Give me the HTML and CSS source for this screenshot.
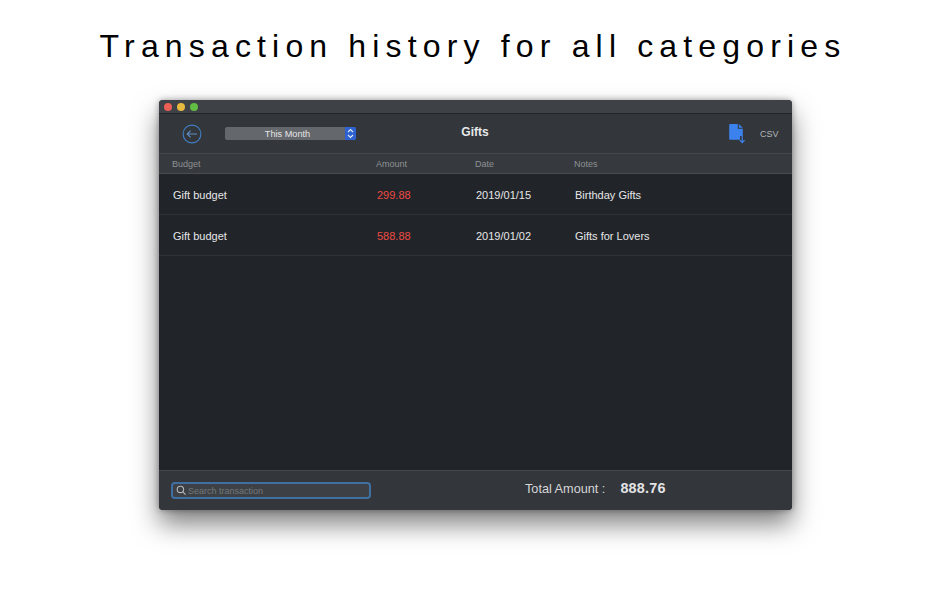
FILE: index.html
```html
<!DOCTYPE html>
<html lang="en">
<head>
<meta charset="utf-8">
<title>Transaction history</title>
<link rel="stylesheet" href="styles.css">
</head>
<body>
<h1 class="headline">Transaction history for all categories</h1>
<main class="window">
  <div class="titlebar">
    <span class="light light-red"></span>
    <span class="light light-yellow"></span>
    <span class="light light-green"></span>
  </div>
  <header class="toolbar">
    <svg class="back" width="20" height="20" viewBox="0 0 20 20" fill="none" stroke="#3f7fc4" stroke-width="1.1">
      <circle cx="10" cy="10" r="8.9"/>
      <path d="M15 10H5.2M8.6 6.6L5.2 10l3.4 3.4" stroke="#5f8fc4"/>
    </svg>
    <div class="select">
      <span class="select-label">This Month</span>
      <span class="select-arrows">
        <svg width="11" height="13" viewBox="0 0 11 13" fill="none" stroke="#dfe9ff" stroke-width="1.1">
          <path d="M3 5l2.5-2.5L8 5M3 8l2.5 2.5L8 8"/>
        </svg>
      </span>
    </div>
    <div class="win-title">Gifts</div>
    <svg class="doc" width="18" height="21" viewBox="0 0 18 21">
      <path d="M1.2 1h7.6v4.8h5v7.2h-2.8v3.8H1.2a1 1 0 0 1-1-1V2a1 1 0 0 1 1-1z" fill="#3b82ee"/>
      <path d="M9.8 1l4 3.8h-4z" fill="#3b82ee"/>
      <path d="M13.2 13v6.6M10.8 17.2l2.4 2.4 2.4-2.4" fill="none" stroke="#3b82ee" stroke-width="1.2"/>
    </svg>
    <span class="csv">CSV</span>
  </header>
  <div class="thead grid">
    <span>Budget</span><span>Amount</span><span>Date</span><span>Notes</span>
  </div>
  <section class="tbody">
    <div class="row grid">
      <span>Gift budget</span><span class="amount">299.88</span><span>2019/01/15</span><span>Birthday Gifts</span>
    </div>
    <div class="row grid">
      <span>Gift budget</span><span class="amount">588.88</span><span>2019/01/02</span><span>Gifts for Lovers</span>
    </div>
  </section>
  <footer class="footer">
    <div class="search">
      <svg width="11" height="11" viewBox="0 0 11 11" fill="none" stroke="#b4b8bb" stroke-width="1.1">
        <circle cx="4.4" cy="4.4" r="3.2"/>
        <path d="M6.8 6.8L9.6 9.6"/>
      </svg>
      <span class="placeholder">Search transaction</span>
    </div>
    <div class="total">
      <span class="total-label">Total Amount :</span>
      <span class="total-value">888.76</span>
    </div>
  </footer>
</main>
</body>
</html>
```

FILE: styles.css
```css
* { box-sizing: border-box; }
html, body { margin: 0; height: 100%; }
body {
  width: 950px;
  height: 594px;
  overflow: hidden;
  background: #fff;
  font-family: "Liberation Sans", Arial, sans-serif;
  display: flex;
  flex-direction: column;
  align-items: center;
}
.headline {
  margin: 27px 4px 0 0;
  height: 73px;
  font-size: 32px;
  line-height: 38px;
  font-weight: 400;
  letter-spacing: 6.16px;
  color: #000;
  white-space: nowrap;
}
.window {
  width: 633px;
  height: 410px;
  margin-left: 1px;
  display: flex;
  flex-direction: column;
  border-radius: 4px;
  overflow: hidden;
  background: #212429;
  box-shadow: 0 14px 26px rgba(0, 0, 0, .5), 0 0 6px rgba(0, 0, 0, .35);
}
.titlebar {
  height: 14px;
  flex: none;
  display: flex;
  align-items: center;
  gap: 5px;
  padding-left: 5px;
  background: #3e4145;
  border-bottom: 1px solid #232528;
}
.light { width: 8px; height: 8px; border-radius: 50%; }
.light-red { background: #ec5f55; }
.light-yellow { background: #e6b93f; }
.light-green { background: #62bd45; }
.toolbar {
  height: 40px;
  flex: none;
  display: flex;
  align-items: center;
  padding-left: 23px;
  background: #33363b;
  border-bottom: 1px solid #44474b;
}
.back { flex: none; }
.select {
  width: 131px;
  height: 13px;
  flex: none;
  margin-left: 23px;
  display: flex;
  background: #64676b;
  border-radius: 2px;
  overflow: hidden;
}
.select-label {
  flex: 1;
  padding-left: 5px;
  text-align: center;
  font-size: 9.2px;
  line-height: 14px;
  color: #e4e5e6;
}
.select-arrows {
  width: 11px;
  background: #2d62d0;
  display: flex;
}
.win-title {
  width: 240px;
  flex: none;
  padding-right: 2px;
  text-align: center;
  font-size: 12px;
  font-weight: 700;
  color: #e8e9ea;
  margin-top: -3px;
}
.doc { flex: none; margin-left: 133px; }
.csv {
  margin-left: 13px;
  font-size: 9px;
  color: #b4b6b8;
  margin-top: 1px;
}
.grid {
  display: grid;
  grid-template-columns: 204px 99px 99px 1fr;
  align-items: center;
}
.thead {
  height: 20px;
  flex: none;
  padding-left: 13px;
  font-size: 9px;
  color: #8e9195;
  background: #36393d;
  border-bottom: 1px solid #4a4d50;
}
.tbody { flex: 1; background: #212429; }
.row {
  height: 41px;
  padding: 1px 0 0 14px;
  font-size: 11px;
  color: #e6e7e8;
  border-bottom: 1px solid #2f3236;
}
.amount { color: #ee4b44; }
.footer {
  height: 40px;
  flex: none;
  display: flex;
  align-items: center;
  padding-left: 12px;
  background: #33363b;
  border-top: 1px solid #44474b;
}
.search {
  width: 200px;
  height: 17px;
  flex: none;
  display: flex;
  align-items: center;
  gap: 1px;
  padding-left: 3px;
  background: #3d4145;
  border: 2px solid #3f6fa3;
  border-radius: 4px;
}
.placeholder { font-size: 9px; color: #73777b; }
.total {
  display: flex;
  align-items: baseline;
  gap: 15px;
  margin-left: 154px;
  margin-top: -5px;
}
.total-label { font-size: 12.7px; color: #d6d7d8; }
.total-value { font-size: 14.4px; font-weight: 700; color: #e2e3e4; letter-spacing: .2px; }
```
